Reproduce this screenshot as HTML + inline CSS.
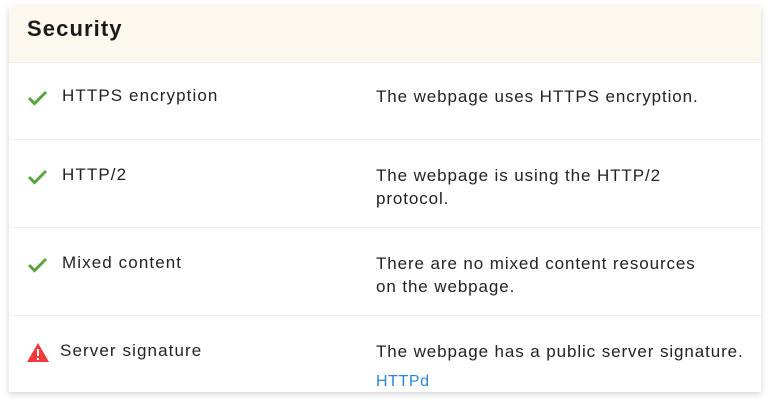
<!DOCTYPE html>
<html><head><style>
body{margin:0;width:770px;height:400px;background:#fff;font-family:"Liberation Sans",sans-serif;overflow:hidden;position:relative}
.card{position:absolute;left:9px;top:6px;width:752px;height:386px;background:#fff;box-shadow:0 2px 6px rgba(0,0,0,.18)}
.hd{height:56px;background:#fcf8ee;position:relative}
.hd h1{margin:0;position:absolute;left:18px;top:10px;font-size:22px;font-weight:bold;color:#1a1a1a;letter-spacing:1.1px}
.row{position:relative;border-top:1px solid #efefef;color:#222;font-size:17px}
.row:first-of-type{border-top:none}
.ic{position:absolute;left:18px}
.lb{position:absolute;left:53px;letter-spacing:1.1px}
.ds{position:absolute;left:367px;line-height:23px;width:385px;letter-spacing:0.9px}
a{position:absolute;left:367px;color:#2a86d8;text-decoration:none;font-size:16px;letter-spacing:0.6px}
</style></head><body>
<div class="card">
<div class="hd"><h1>Security</h1></div>
<div class="row" style="height:76px">
 <svg class="ic" style="top:26px" width="22" height="18" viewBox="0 0 22 18"><path d="M2 9 L7.5 14.5 L19 3" fill="none" stroke="#5aa33a" stroke-width="3"/></svg>
 <span class="lb" style="top:23px">HTTPS encryption</span>
 <span class="ds" style="top:22px">The webpage uses HTTPS encryption.</span>
</div>
<div class="row" style="height:87px">
 <svg class="ic" style="top:28px" width="22" height="18" viewBox="0 0 22 18"><path d="M2 9 L7.5 14.5 L19 3" fill="none" stroke="#5aa33a" stroke-width="3"/></svg>
 <span class="lb" style="top:25px">HTTP/2</span>
 <span class="ds" style="top:24px">The webpage is using the HTTP/2<br>protocol.</span>
</div>
<div class="row" style="height:87px">
 <svg class="ic" style="top:28px" width="22" height="18" viewBox="0 0 22 18"><path d="M2 9 L7.5 14.5 L19 3" fill="none" stroke="#5aa33a" stroke-width="3"/></svg>
 <span class="lb" style="top:25px">Mixed content</span>
 <span class="ds" style="top:24px">There are no mixed content resources<br>on the webpage.</span>
</div>
<div class="row" style="height:77px">
 <svg class="ic" style="top:27px" width="22" height="19" viewBox="0 0 22 19"><path d="M11 0 L22 19 L0 19 Z" fill="#f23a3a"/><rect x="10" y="6" width="2" height="7" fill="#fff"/><rect x="10" y="15" width="2" height="2" fill="#fff"/></svg>
 <span class="lb" style="top:25px;left:51px">Server signature</span>
 <span class="ds" style="top:24px">The webpage has a public server signature.</span>
 <a style="top:57px">HTTPd</a>
</div>
</div>
</body></html>
